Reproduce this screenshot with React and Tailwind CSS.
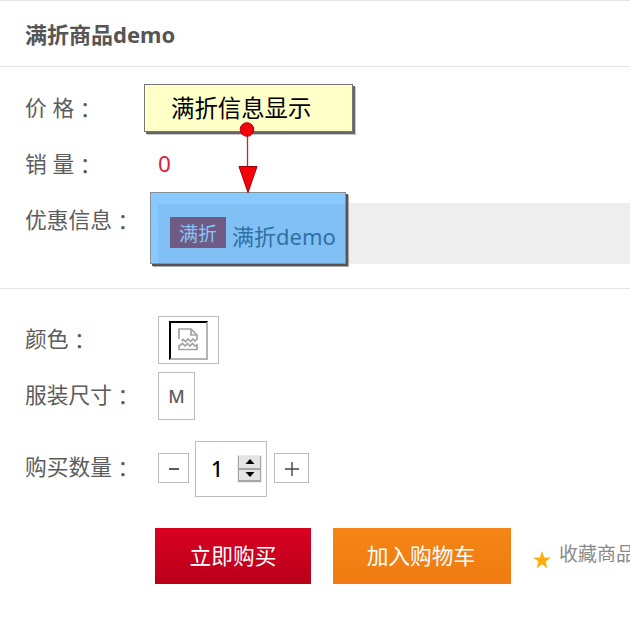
import React from "react";

function Label({ children }) {
  return (
    <div className="w-[133px] shrink-0 whitespace-pre text-[#5c5c5c]">
      {children}
      <span className="inline-block translate-y-[2px] font-['Noto_Sans_CJK_TC',sans-serif]" lang="zh-TW">：</span>
    </div>
  );
}

function BrokenImage() {
  return (
    <svg width="22" height="24" viewBox="0 0 22 24" fill="none" stroke="#a3a3a3" strokeWidth="1.7">
      <path d="M1 11V1H13L19 7V11L17 13L15 11L12.500 13.500L10 11L7.500 13.500L5 11.500L3.500 13" />
      <path d="M13 1V7H19" />
      <path d="M1 21.500H19V17L17 18L14.500 15.500L12 18L9.500 15.500L7 18L4.500 15.500L2 17.500H1Z" />
    </svg>
  );
}

function Stepper() {
  return (
    <div className="flex h-[28px] w-[25px] flex-col border border-[#ececec] bg-[#a6a6a6] px-px">
      <div className="flex h-[12px] items-center justify-center bg-[#e4e4e4]">
        <svg width="10" height="6" viewBox="0 0 10 6"><path d="M5 0L9.500 5H.5Z" fill="#000" /></svg>
      </div>
      <div className="mt-[2px] flex h-[10px] items-center justify-center bg-[#e4e4e4]">
        <svg width="10" height="6" viewBox="0 0 10 6"><path d="M5 5L9.500 0H.5Z" fill="#000" /></svg>
      </div>
    </div>
  );
}

export default function App() {
  return (
    <div className="relative h-[635px] w-[630px] overflow-hidden bg-white font-['Noto_Sans','Noto_Sans_CJK_SC',sans-serif] text-[21.75px] leading-[30px] text-[#5c5c5c]" lang="zh-CN">
      <header className="flex h-[67px] items-center border-t border-b border-[#e6e6e6] pl-[25px] text-[22px] font-bold text-[#555]">
        <h1>满折商品demo</h1>
      </header>

      <section className="h-[222px] border-b border-[#e6e6e6] pt-[12px] pl-[25px]">
        <div className="flex h-[56px] items-center"><Label>价 格</Label></div>
        <div className="flex h-[56px] items-center">
          <Label>销 量</Label>
          <span className="pt-[2px] text-[22.5px] text-[#e4183f]">0</span>
        </div>
        <div className="flex pt-[12px]">
          <div className="mt-[-11px] pt-[12px]"><Label>优惠信息</Label></div>
          <div className="flex h-[61px] flex-1 bg-[#eee] pt-[14px] pl-[12px]">
            <span className="relative z-10 flex h-[31px] w-[56px] items-center justify-center bg-[#6f5b85] pt-[2px] text-[19px] text-[#84c5f7]">满折</span>
            <span className="relative z-10 mt-[4px] ml-[6px] text-[22px] text-[#3071a5]">满折demo</span>
          </div>
        </div>
      </section>

      <section className="pt-[27px] pl-[25px]">
        <div className="flex h-[48px] items-center">
          <div className="pb-[3px]"><Label>颜色</Label></div>
          <div className="flex h-[48px] w-[61px] items-center justify-center border border-[#bdbdbd]">
            <div className="flex h-[39px] w-[39px] items-center justify-center border-t-2 border-r-2 border-b-2 border-l-2 border-t-black border-r-[#b4b4b4] border-b-[#b4b4b4] border-l-black">
              <BrokenImage />
            </div>
          </div>
        </div>
        <div className="mt-[8px] flex h-[48px] items-center">
          <div className="pb-[3px]"><Label>服装尺寸</Label></div>
          <div className="flex h-[48px] w-[37px] items-center justify-center border border-[#bdbdbd] text-[18px] font-medium">M</div>
        </div>
        <div className="mt-[21px] flex h-[56px] items-center">
          <div className="pb-[5px]"><Label>购买数量</Label></div>
          <button className="mb-[2px] flex h-[30px] w-[31px] items-center justify-center border border-[#bdbdbd] pt-[2px]">
            <svg width="10" height="2"><path d="M0 1H10" stroke="#333" strokeWidth="1.600" /></svg>
          </button>
          <div className="ml-[6px] flex h-[56px] w-[72px] items-center justify-end border border-[#bdbdbd] pr-[4px] text-black">
            <span className="mr-[14px] text-[21px] font-medium">1</span>
            <Stepper />
          </div>
          <button className="mb-[2px] ml-[7px] flex h-[30px] w-[35px] items-center justify-center border border-[#bdbdbd] pt-[2px]">
            <svg width="14" height="14"><path d="M0 7H14M7 0V14" stroke="#444" strokeWidth="1.400" /></svg>
          </button>
        </div>
      </section>

      <div className="mt-[31px] flex pl-[155px] text-white">
        <button className="h-[56px] w-[156px] shrink-0 bg-linear-to-b from-[#da0022] to-[#b9001b]">立即购买</button>
        <button className="ml-[22px] h-[56px] w-[178px] shrink-0 bg-linear-to-b from-[#f58515] to-[#ef7b12] pr-[2px]">加入购物车</button>
        <svg className="mt-[23px] ml-[22px] shrink-0" width="18" height="18" viewBox="0 0 18 18">
          <path d="M9 0L11.200 6.400H18L12.600 10.500L14.600 17.400L9 13.300L3.400 17.400L5.400 10.500L0 6.400H6.800Z" fill="#ffad0d" />
        </svg>
        <span className="ml-[8px] mt-[11px] shrink-0 whitespace-nowrap text-[19px] leading-[30px] text-[#8b8b8b]">收藏商品</span>
      </div>

      <div className="absolute top-[84px] left-[144px] flex h-[48px] w-[209px] items-center border-[1.5px] border-[#777] bg-[#ffffc8] pb-[2px] pl-[26px] font-['Noto_Sans_CJK_SC',sans-serif] text-[23.4px] text-black shadow-[2px_2px_0_#666,3px_3px_0_#c8c8c8]">
        满折信息显示
      </div>
      <div className="absolute top-[192px] left-[150px] h-[72px] w-[196px] border-[1.5px] border-[#858f96] bg-[#88caff] pt-[11px] pl-[7px] shadow-[2px_2px_0_#555,3px_3px_0_#aaa]">
        <div className="h-full bg-[#80c0f5]" />
      </div>
      <svg className="absolute top-[122px] left-[237px] z-20" width="22" height="72" viewBox="0 0 22 72">
        <path d="M10.500 8V46" stroke="#f01420" strokeWidth="1.300" />
        <circle cx="10" cy="7.500" r="6.800" fill="#f5000c" stroke="#b00010" />
        <path d="M2 44.500H20L11 70.500Z" fill="#f5000c" stroke="#900" />
      </svg>
    </div>
  );
}
